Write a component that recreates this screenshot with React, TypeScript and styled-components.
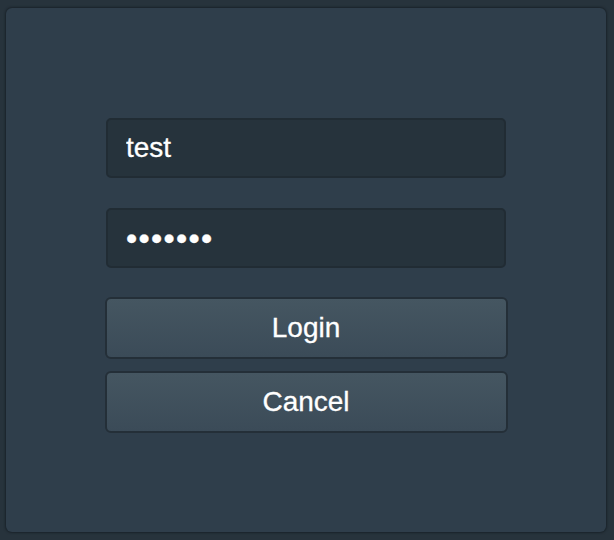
import React from 'react'
import styled, { createGlobalStyle } from 'styled-components'

const GlobalStyle = createGlobalStyle`
  html, body {
    margin: 0;
    padding: 0;
    background: #27333c;
    font-family: 'Liberation Sans', Arial, sans-serif;
  }
`

const Page = styled.div`
  width: 614px;
  height: 540px;
  padding: 8px 8px 8px 6px;
  box-sizing: border-box;
`

const Panel = styled.div`
  width: 600px;
  height: 524px;
  box-sizing: border-box;
  background: #2f3e4b;
  border-radius: 6px;
  box-shadow: 0 0 2px 1px rgba(20, 28, 34, 0.7);
  display: flex;
  flex-direction: column;
  align-items: center;
  padding-top: 110px;
`

const Field = styled.input<{ $secret?: boolean }>`
  width: 400px;
  height: 60px;
  box-sizing: border-box;
  margin-bottom: 30px;
  padding: 0 18px;
  background: #26333c;
  border: 2px solid #212c34;
  border-radius: 5px;
  color: #ffffff;
  font-family: 'Liberation Sans', Arial, sans-serif;
  font-size: ${(p) => (p.$secret ? '32px' : '28px')};
  letter-spacing: ${(p) => (p.$secret ? '1.3px' : 'normal')};
  -webkit-text-stroke: 0.3px #ffffff;
  outline: none;
`

const Buttons = styled.div`
  display: flex;
  flex-direction: column;
  gap: 12px;
  margin-top: -1px;
`

const Button = styled.button`
  width: 403px;
  height: 62px;
  box-sizing: border-box;
  background: linear-gradient(#455661, #3b4b58);
  border: 2px solid #242f38;
  border-radius: 6px;
  color: #ffffff;
  font-family: 'Liberation Sans', Arial, sans-serif;
  font-size: 28px;
  -webkit-text-stroke: 0.3px #ffffff;
  cursor: pointer;
`

export default function App() {
  return (
    <>
      <GlobalStyle />
      <Page>
        <Panel>
          <Field type="text" defaultValue="test" />
          <Field type="password" $secret defaultValue="1234567" />
          <Buttons>
            <Button>Login</Button>
            <Button>Cancel</Button>
          </Buttons>
        </Panel>
      </Page>
    </>
  )
}
